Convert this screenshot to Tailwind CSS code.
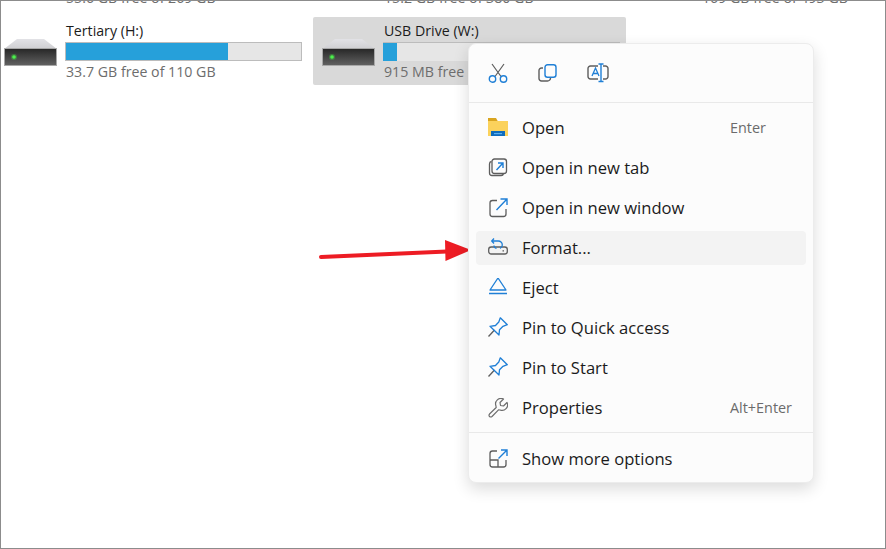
<!DOCTYPE html>
<html lang="en">
<head>
    <meta charset="UTF-8">
    <title>This PC</title>
    <script src="https://cdn.jsdelivr.net/npm/@tailwindcss/browser@4"></script>
</head>
<body class="bg-white">
<div class="relative w-[886px] h-[549px] overflow-hidden border border-[#8c8c8c] bg-white font-['Open_Sans',sans-serif] text-[#1b1b1b]">

    <!-- drives -->
    <div class="grid grid-cols-[313px_313px_313px] gap-x-[5px] gap-y-[8px] ml-[-6px] mt-[-59px]">
        <div class="h-[67px] pl-[71px] pt-[45px] text-[14.200px] text-[#6d6d6d]">55.6 GB free of 269 GB</div>
        <div class="h-[67px] pl-[71px] pt-[45px] text-[14.200px] text-[#6d6d6d]">15.2 GB free of 380 GB</div>
        <div class="h-[67px] pl-[71px] pt-[45px] text-[14.200px] text-[#6d6d6d]">169 GB free of 493 GB</div>

        <div class="flex h-[68px]">
            <svg class="w-[71px] h-[67px] shrink-0" viewBox="0 0 71 67">
                <defs>
                    <linearGradient id="top1" x1="0" y1="0" x2="0" y2="1"><stop offset="0" stop-color="#e2e2e6"/><stop offset="1" stop-color="#cfcfd2"/></linearGradient>
                    <linearGradient id="body1" x1="0" y1="0" x2="0" y2="1"><stop offset="0" stop-color="#262626"/><stop offset="1" stop-color="#626262"/></linearGradient>
                </defs>
                <path d="M22 22h27l13 10H9z" fill="url(#top1)"/>
                <rect x="9.500" y="31.500" width="52" height="17" fill="url(#body1)" stroke="#a8a8a8"/>
                <circle cx="19" cy="40" r="3" fill="#3fe03f" fill-opacity="0.350"/>
                <circle cx="19" cy="40" r="1.800" fill="#4cf04c"/>
            </svg>
            <div class="flex-1 pr-[6px]">
                <div class="text-[14.200px] leading-[20px] mt-[4px]">Tertiary (H:)</div>
                <div class="h-[19px] mt-[1px] ml-[-1px] border border-[#bcbcbc] bg-[#e6e6e6]">
                    <div class="h-full w-[69%] bg-[#26a0da]"></div>
                </div>
                <div class="text-[14.200px] leading-[20px] mt-[1px] text-[#6d6d6d]">33.7 GB free of 110 GB</div>
            </div>
        </div>

        <div class="flex h-[68px] rounded-[2px] bg-[#d9d9d9]">
            <svg class="w-[71px] h-[67px] shrink-0" viewBox="0 0 71 67">
                <path d="M22 22h27l13 10H9z" fill="url(#top1)"/>
                <rect x="9.500" y="31.500" width="52" height="17" fill="url(#body1)" stroke="#a8a8a8"/>
                <circle cx="19" cy="40" r="3" fill="#3fe03f" fill-opacity="0.350"/>
                <circle cx="19" cy="40" r="1.800" fill="#4cf04c"/>
            </svg>
            <div class="flex-1 pr-[6px]">
                <div class="text-[14.200px] leading-[20px] mt-[4px]">USB Drive (W:)</div>
                <div class="h-[19px] mt-[1px] ml-[-1px] border-t border-[#bcbcbc] bg-[#e6e6e6]">
                    <div class="h-full w-[6%] bg-[#26a0da]"></div>
                </div>
                <div class="text-[14.200px] leading-[20px] mt-[1px] text-[#6d6d6d]">915 MB free of 1 GB</div>
            </div>
        </div>
    </div>

    <!-- arrow -->
    <svg class="absolute left-[318px] top-[238px] w-[155px] h-[24px]" viewBox="0 0 155 24">
        <path d="M2 18 128 12.500" stroke="#ed1c24" stroke-width="4" stroke-linecap="round" fill="none"/>
        <path d="M126 1l26 10-25.500 11z" fill="#ed1c24"/>
    </svg>

    <!-- context menu -->
    <div class="absolute left-[467px] top-[42px] w-[346px] h-[440px] rounded-[8px] border border-[#ececec] bg-[#fcfcfc] shadow-[0_6px_16px_rgba(0,0,0,0.14)] text-[16.600px]">
        <div class="flex items-center h-[59px] border-b border-[#e9e9e9] pl-[19px]">
            <svg class="w-[20px] h-[20px]" viewBox="0 0 20 20" fill="none">
                <path d="M4 1 13 13.500M16 1 7 13.500" stroke="#5d5d5d" stroke-width="1.200"/>
                <circle cx="4.500" cy="16" r="3.200" stroke="#1f7fd6" stroke-width="1.400"/>
                <circle cx="15.500" cy="16" r="3.200" stroke="#1f7fd6" stroke-width="1.400"/>
            </svg>
            <svg class="w-[20px] h-[20px] ml-[30px]" viewBox="0 0 20 20" fill="none">
                <path d="M5 5H3.500A2.500 2.500 0 0 0 1 7.500v8A2.500 2.500 0 0 0 3.500 18h6a3 3 0 0 0 3-3" stroke="#5d5d5d" stroke-width="1.400"/>
                <rect x="7" y="1.700" width="11" height="12.600" rx="2.500" stroke="#1f7fd6" stroke-width="1.400"/>
            </svg>
            <svg class="w-[22px] h-[20px] ml-[29px]" viewBox="0 0 22 20" fill="none">
                <path d="M11 3H3.500A2.500 2.500 0 0 0 1 5.500v8A2.500 2.500 0 0 0 3.500 16H11M16 3h2.500A2.500 2.500 0 0 1 21 5.500v8a2.500 2.500 0 0 1-2.500 2.500H16" stroke="#5d5d5d" stroke-width="1.400"/>
                <path d="M5 13 8.500 5 12 13M6.200 10.500h4.600" stroke="#1f7fd6" stroke-width="1.300"/>
                <path d="M11.500 1h5M11.500 18.500h5M14 1v17.500" stroke="#1f7fd6" stroke-width="1.400"/>
            </svg>
        </div>

        <div class="flex flex-col gap-[6px] px-[7px] pt-[8px]">
            <div class="flex items-center h-[34px] rounded-[4px] pl-[12px]">
                <svg class="w-[20px] h-[20px] mr-[14px]" viewBox="0 0 20 20">
                    <path d="M0 0h8l2 3.500H0z" fill="#d9a520"/>
                    <path d="M0 3h20v15H0z" fill="#fbd25c"/>
                    <path d="M3 13h14v5H3z" fill="#0f6cbd"/>
                    <path d="M6 15h8v1.200H6z" fill="#5cb0f0"/>
                </svg>
                <span class="flex-1">Open</span>
                <span class="w-[63px] mr-[13px] text-[14.400px] text-[#6b6b6b]">Enter</span>
            </div>
            <div class="flex items-center h-[34px] rounded-[4px] pl-[12px]">
                <svg class="w-[20px] h-[20px] mr-[14px]" viewBox="0 0 20 20" fill="none">
                    <path d="M3.500 3.500A2.500 2.500 0 0 0 1.500 6v9a2.500 2.500 0 0 0 2.500 2.500h9a2.500 2.500 0 0 0 2.500-2" stroke="#5d5d5d" stroke-width="1.300"/>
                    <rect x="4" y="1" width="14.500" height="14.500" rx="2.500" stroke="#5d5d5d" stroke-width="1.300"/>
                    <path d="M8.500 12 14.500 5.500M10 5h5v5" stroke="#1f7fd6" stroke-width="1.400"/>
                </svg>
                <span class="flex-1">Open in new tab</span>
            </div>
            <div class="flex items-center h-[34px] rounded-[4px] pl-[12px]">
                <svg class="w-[20px] h-[20px] mr-[14px]" viewBox="0 0 20 20" fill="none">
                    <path d="M9 2.500H4.500A2.500 2.500 0 0 0 2 5v11a2.500 2.500 0 0 0 2.500 2.500h11A2.500 2.500 0 0 0 18 16v-5" stroke="#5d5d5d" stroke-width="1.300"/>
                    <path d="M8.500 12 18.500 1.500M12.500 1h6.500v6" stroke="#1f7fd6" stroke-width="1.400"/>
                </svg>
                <span class="flex-1">Open in new window</span>
            </div>
            <div class="flex items-center h-[34px] rounded-[4px] pl-[12px] bg-[#f3f3f3]">
                <svg class="w-[20px] h-[20px] mr-[14px]" viewBox="0 0 20 20" fill="none">
                    <rect x="0.700" y="9" width="18.600" height="7" rx="2.500" stroke="#5d5d5d" stroke-width="1.300" fill="#f3f3f3"/>
                    <path d="M14.500 12.800h1.500" stroke="#5d5d5d" stroke-width="1.300"/>
                    <path d="M6 .5 3.700 3 6 5.500M3.700 3h6.300a4 4 0 0 1 4.300 4c0 1.500-.8 2.700-2.300 3.300M6 7.500c0 1.400 1 2.500 2.500 3" stroke="#1f7fd6" stroke-width="1.300"/>
                </svg>
                <span class="flex-1">Format...</span>
            </div>
            <div class="flex items-center h-[34px] rounded-[4px] pl-[12px]">
                <svg class="w-[20px] h-[20px] mr-[14px]" viewBox="0 0 20 20" fill="none">
                    <path d="M10 0 18 12H2z" stroke="#1f7fd6" stroke-width="1.300" stroke-linejoin="round"/>
                    <path d="M1 15.500h18" stroke="#1f7fd6" stroke-width="1.500"/>
                </svg>
                <span class="flex-1">Eject</span>
            </div>
            <div class="flex items-center h-[34px] rounded-[4px] pl-[12px]">
                <svg class="w-[20px] h-[20px] mr-[14px] -translate-y-px" viewBox="0 0 20 20" fill="none">
                    <path d="M.5 19.500 6.500 13" stroke="#5d5d5d" stroke-width="1.300"/>
                    <path d="M12.300.8 19.300 7.700 15 9.300 11.500 12.800 11 18 2 9.300 7.500 8.500 10.800 5z" stroke="#1f7fd6" stroke-width="1.300" stroke-linejoin="round"/>
                </svg>
                <span class="flex-1">Pin to Quick access</span>
            </div>
            <div class="flex items-center h-[34px] rounded-[4px] pl-[12px]">
                <svg class="w-[20px] h-[20px] mr-[14px] -translate-y-px" viewBox="0 0 20 20" fill="none">
                    <path d="M.5 19.500 6.500 13" stroke="#5d5d5d" stroke-width="1.300"/>
                    <path d="M12.300.8 19.300 7.700 15 9.300 11.500 12.800 11 18 2 9.300 7.500 8.500 10.800 5z" stroke="#1f7fd6" stroke-width="1.300" stroke-linejoin="round"/>
                </svg>
                <span class="flex-1">Pin to Start</span>
            </div>
            <div class="flex items-center h-[34px] rounded-[4px] pl-[12px]">
                <svg class="w-[20px] h-[20px] mr-[14px]" viewBox="0 0 20 20" fill="none">
                    <path d="M19 4.500 15.500 8 12.500 7.500 12 4.500 15.500 1A5.500 5.500 0 0 0 8 8c0 .5 0 1 .2 1.500L1.500 16a2 2 0 0 0 0 2.500 2 2 0 0 0 2.500 0l6.500-6.700c.5.200 1 .2 1.500.2a5.500 5.500 0 0 0 7-7.500z" stroke="#6d6d6d" stroke-width="1.200" stroke-linejoin="round"/>
                </svg>
                <span class="flex-1">Properties</span>
                <span class="w-[63px] mr-[13px] text-[14.400px] text-[#6b6b6b] whitespace-nowrap">Alt+Enter</span>
            </div>
        </div>

        <div class="border-t border-[#e9e9e9] mt-[7px] px-[7px] pt-[9px]">
            <div class="flex items-center h-[34px] rounded-[4px] pl-[12px]">
                <svg class="w-[20px] h-[20px] mr-[14px]" viewBox="0 0 20 20" fill="none">
                    <path d="M9 2H4.500A2.500 2.500 0 0 0 2 4.500v11A2.500 2.500 0 0 0 4.500 18h11a2.500 2.500 0 0 0 2.500-2.500V11M2 11h8v7" stroke="#5d5d5d" stroke-width="1.300"/>
                    <path d="M10.500 9.500 18.500 1.500M13 1h6v6" stroke="#1f7fd6" stroke-width="1.400"/>
                </svg>
                <span class="flex-1">Show more options</span>
            </div>
        </div>
    </div>
</div>
</body>
</html>
